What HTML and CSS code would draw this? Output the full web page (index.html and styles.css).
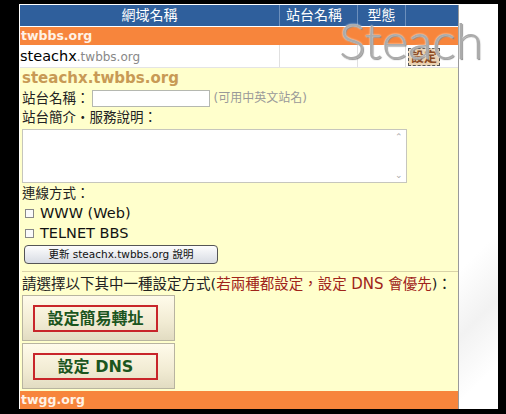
FILE: index.html
```html
<html>
  <head>
    <title>twbbs</title>
    <link rel="stylesheet" href="styles.css">
  </head>

  <body>
    <div id="frame">
      <div id="panel">
        <div class="row head">
          <div class="c1">網域名稱</div>
          <div class="c2">站台名稱</div>
          <div class="c3">型態</div>
          <div class="c4"></div>
        </div>
        <div class="domain">twbbs.org</div>
        <div class="row site">
          <div class="c1"><span class="host">steachx</span><span class="suffix">.twbbs.org</span></div>
          <div class="c2"></div>
          <div class="c3"></div>
          <div class="c4"><span class="setlink">設定</span></div>
        </div>
        <div id="editor">
          <div class="title">steachx.twbbs.org</div>
          <div class="line name">站台名稱：<span class="field"></span><span class="hint">(可用中英文站名)</span></div>
          <div class="line">站台簡介・服務說明：</div>
          <div class="desc">
            <div class="scroll"><span>&#8963;</span><span>&#8964;</span></div>
          </div>
          <div class="line">連線方式：</div>
          <div class="check"><span class="box"></span>WWW (Web)</div>
          <div class="check"><span class="box"></span>TELNET BBS</div>
          <div class="update">更新 steachx.twbbs.org 說明</div>
          <div class="choose">請選擇以下其中一種設定方式(<span class="warn">若兩種都設定，設定 <b>DNS</b> 會優先</span>)：</div>
          <div class="bigbtn"><span>設定簡易轉址</span></div>
          <div class="bigbtn"><span>設定 DNS</span></div>
        </div>
        <div class="domain last">twgg.org</div>
      </div>
      <div id="side"></div>
      <div id="mark">Steach</div>
    </div>
  </body>
</html>
```

FILE: styles.css
```css
* {
  margin: 0;
  padding: 0;
  box-sizing: border-box;
}

body {
  background: #000;
  font-family: "DejaVu Sans", "Noto Sans CJK TC", sans-serif;
  font-size: 13.5px;
}

#frame {
  position: relative;
  margin: 4px 8px 0 19px;
  height: 405px;
  background: #fff;
  display: flex;
  padding: 1px 0 0 1px;
  overflow: hidden;
}

#panel {
  width: 439px;
  border-right: 1px solid #9a9a9a;
  display: flex;
  flex-direction: column;
}

#side {
  flex: 1;
  background: linear-gradient(135deg, #fff 60%, #f2f2f2 75%, #fff 90%);
}

.row {
  display: flex;
}

.c1 { width: 259px; }
.c2 { width: 78px; }
.c3 { width: 48px; }
.c4 { flex: 1; }

.head {
  height: 21px;
  background: #2f5f9c;
  color: #fff;
  font-size: 14px;
  line-height: 21px;
  text-align: center;
}

.head div + div {
  border-left: 1px solid #6c8fbc;
}

.head .c2 { text-align: left; padding-left: 6px; }

.domain {
  height: 18px;
  margin-top: 1px;
  background: #f7853c;
  color: #fff2e6;
  font-weight: bold;
  font-size: 12.5px;
  line-height: 18px;
  padding-left: 1px;
}

.domain.last {
  margin-top: 0;
  flex: 1;
}

.site {
  height: 23px;
  line-height: 23px;
  border-bottom: 1px solid #e4e4e4;
}

.site div + div {
  border-left: 1px solid #e0e0e0;
}

.host {
  font-size: 14.5px;
  color: #000;
}

.suffix {
  font-size: 12px;
  color: #888;
}

.setlink {
  display: inline-block;
  margin: 3px 0 0 2px;
  height: 18px;
  line-height: 15px;
  padding: 0 2px;
  border: 1px dashed #555;
  background: #ead3b4;
  color: #8b4a23;
  font-weight: bold;
  font-size: 13px;
}

#editor {
  background: #ffffcc;
  padding: 0 0 0 2px;
}

.title {
  height: 21px;
  line-height: 21px;
  font-size: 15px;
  font-weight: bold;
  color: #c89a55;
}

.line {
  height: 19px;
  line-height: 19px;
  color: #222;
}

.line.name {
  display: flex;
  align-items: center;
}

.field {
  width: 118px;
  height: 17px;
  background: #fff;
  border: 1px solid #b5b8b0;
  margin-left: 2px;
}

.hint {
  color: #999;
  font-size: 12px;
  margin-left: 4px;
}

.desc {
  width: 385px;
  height: 54px;
  margin: 2px 0 1px;
  background: #fff;
  border: 1px solid #c6c6bd;
  display: flex;
  justify-content: flex-end;
}

.scroll {
  width: 9px;
  margin: 2px 2px 2px 0;
  display: flex;
  flex-direction: column;
  justify-content: space-between;
  font-size: 9px;
  line-height: 10px;
  color: #aaa;
}

.check {
  height: 20px;
  line-height: 20px;
  font-size: 14.5px;
  color: #111;
  display: flex;
  align-items: center;
}

.box {
  width: 9px;
  height: 9px;
  border: 1px solid #888;
  background: #fafafa;
  margin: 0 6px 0 3px;
}

.update {
  width: 194px;
  height: 19px;
  margin: 2px 0 0 2px;
  border: 1px solid #555;
  border-radius: 4px;
  background: linear-gradient(#fdfdfd, #d8dce4);
  text-align: center;
  font-size: 10.5px;
  line-height: 17px;
  color: #111;
}

.choose {
  margin-top: 7px;
  border-top: 1px solid #d9d3a8;
  height: 24px;
  line-height: 24px;
  font-size: 14.5px;
  color: #222;
  white-space: nowrap;
}

.warn {
  color: #a0241a;
}

.warn b {
  font-weight: normal;
  font-size: 15px;
}

.bigbtn {
  width: 153px;
  height: 46px;
  margin-bottom: 2px;
  border: 1px solid #b8b4a0;
  background: linear-gradient(#fffbea, #f1ebd3 60%, #e2dcc2);
  display: flex;
  align-items: center;
  padding-left: 10px;
}

.bigbtn span {
  width: 125px;
  height: 27px;
  border: 2px solid #c8252a;
  text-align: center;
  line-height: 23px;
  font-size: 16px;
  font-weight: bold;
  color: #1b551e;
}

#mark {
  position: absolute;
  left: 320px;
  top: 6px;
  font-family: "Lato", sans-serif;
  font-weight: 300;
  font-size: 50px;
  color: #ababab;
  text-shadow: 0 0 2px #fff, 1px 1px 1px #777;
}
```
